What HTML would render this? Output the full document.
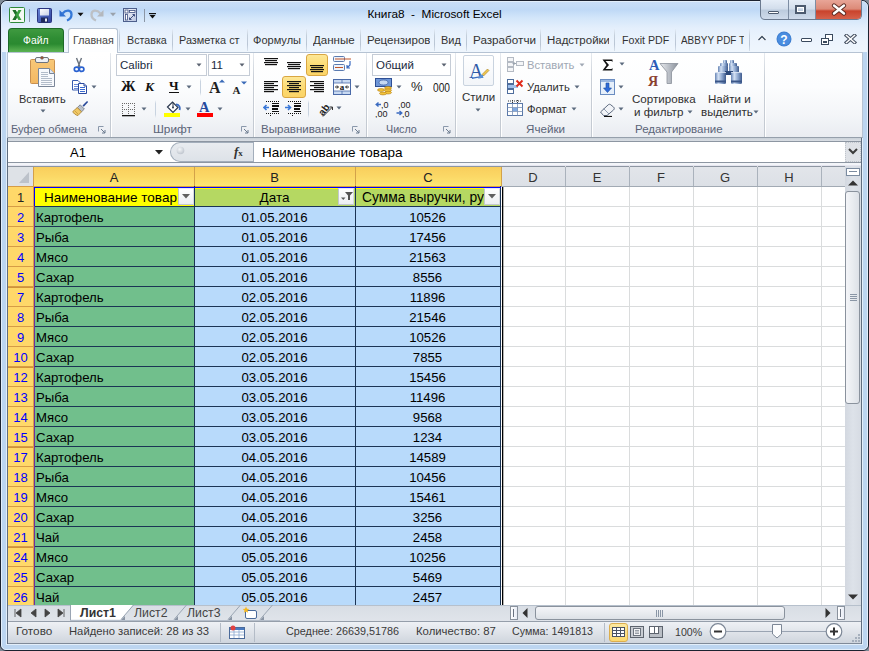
<!DOCTYPE html>
<html><head><meta charset="utf-8">
<style>
*{box-sizing:border-box;margin:0;padding:0}
html,body{width:869px;height:651px;overflow:hidden}
body{position:relative;font-family:"Liberation Sans",sans-serif;background:#c4d8ef}
.a{position:absolute}
.t{white-space:nowrap}
</style></head><body>

<div class="a" style="left:0px;top:0px;width:869px;height:651px;background:#7f8a96"></div>
<div class="a" style="left:0px;top:0px;width:869px;height:651px;background:#bcd5f0;border:1px solid #1c2230;border-radius:7px 7px 6px 6px;"></div>
<div class="a" style="left:1px;top:1px;width:867px;height:649px;border:1px solid #e2eefa;border-radius:6px 6px 5px 5px;"></div>
<div class="a" style="left:2px;top:2px;width:865px;height:50px;background:linear-gradient(#c9def7 0,#bfd9f6 8px,#d3e6fa 16px,#e4effc 26px,#ecf4fd 40px,#eff6fd 50px);border-radius:5px 5px 0 0;"></div>
<div class="a" style="left:6px;top:52px;width:857px;height:593px;border:1px solid #e2eefa;"></div>
<div class="a" style="left:7px;top:52px;width:855px;height:592px;border:1px solid #5f6d80;border-top:none"></div>
<div class="a t" style="left:0px;top:6.0px;height:16px;line-height:16px;font-size:11.8px;color:#000;width:869px;text-align:center;">Книга8&nbsp; -&nbsp; Microsoft Excel</div>
<svg class="a" style="left:8px;top:6px" width="18" height="18" viewBox="0 0 18 18"><rect x="1.5" y="1.5" width="15" height="15" rx="1" fill="#f4f9f2" stroke="#2f8a3a"/><path d="M4.5 4 H7.6 L9 6.6 L10.4 4 H13.5 L10.6 9 L13.5 14 H10.4 L9 11.4 L7.6 14 H4.5 L7.4 9z" fill="#3aa040"/><path d="M4.5 4 H7.6 L9 6.6 L7.4 9 z M4.5 14 L7.4 9 L9 11.4 L7.6 14z" fill="#1f6f2a"/></svg>
<div class="a" style="left:29px;top:9px;width:1px;height:13px;background:#8b9bb0"></div>
<svg class="a" style="left:37px;top:8px" width="15" height="15" viewBox="0 0 15 15"><defs><linearGradient id="sv" x1="0" y1="0" x2="1" y2="1"><stop offset="0" stop-color="#6a86d8"/><stop offset="1" stop-color="#2c3f9a"/></linearGradient><linearGradient id="svl" x1="0" y1="0" x2="1" y2="1"><stop offset="0" stop-color="#ffffff"/><stop offset="1" stop-color="#c8d2e8"/></linearGradient></defs><rect x="0.5" y="0.5" width="14" height="14" rx="1" fill="url(#sv)" stroke="#2a3580"/><rect x="3" y="1" width="9" height="6.5" fill="url(#svl)"/><rect x="4" y="9.5" width="7" height="5" fill="#1e2a5e"/><rect x="8" y="10.5" width="2" height="3" fill="#e8ecf5"/></svg>
<svg class="a" style="left:58px;top:7px" width="16" height="15" viewBox="0 0 16 15"><path d="M1.5 3 L1.5 9.5 L8 9.5z" fill="#2f6fd0"/><path d="M4.5 6.5 C8 2.5 13.5 2.5 13.5 7.5 C13.5 10.5 11.5 12.5 9 13.5" fill="none" stroke="#3478d8" stroke-width="2.3"/></svg>
<svg class="a" style="left:77px;top:12px" width="7" height="5" viewBox="0 0 7 5"><path d="M0.5 0.8h6l-3 3.4z" fill="#111"/></svg>
<svg class="a" style="left:89px;top:7px" width="16" height="15" viewBox="0 0 16 15"><path d="M14.5 3 L14.5 9.5 L8 9.5z" fill="#b4b8bd"/><path d="M11.5 6.5 C8 2.5 2.5 2.5 2.5 7.5 C2.5 10.5 4.5 12.5 7 13.5" fill="none" stroke="#bcc0c5" stroke-width="2.3"/></svg>
<svg class="a" style="left:110px;top:12px" width="6" height="5" viewBox="0 0 6 5"><path d="M0 0.8h6l-3 3.4z" fill="#9aa2ac"/></svg>
<svg class="a" style="left:123px;top:8px" width="14" height="14" viewBox="0 0 14 14"><defs><linearGradient id="qc" x1="0" y1="0" x2="1" y2="1"><stop offset="0" stop-color="#ffffff"/><stop offset="1" stop-color="#b8c4e0"/></linearGradient></defs><rect x="0.5" y="0.5" width="13" height="13" fill="url(#qc)" stroke="#4d5f8c"/><rect x="2" y="2" width="3" height="3" fill="#fff" stroke="#3d4f80" stroke-width="0.8"/><rect x="6.5" y="2.5" width="5.5" height="2" fill="#fff" stroke="#3d4f80" stroke-width="0.8"/><rect x="2.5" y="6.5" width="2" height="5.5" fill="#fff" stroke="#3d4f80" stroke-width="0.8"/><path d="M6.5 11.5 L11.5 6.5 M6.5 9.5 V11.5 H8.5 M11.5 8.5 V6.5 H9.5" stroke="#3d4f80" fill="none" stroke-width="1"/></svg>
<div class="a" style="left:144px;top:9px;width:1px;height:13px;background:#8b96a5"></div>
<svg class="a" style="left:149px;top:13px" width="8" height="6" viewBox="0 0 8 6"><rect x="0" y="0" width="7" height="1.2" fill="#111"/><path d="M0.5 2h6l-3 3.5z" fill="#111"/></svg>
<div class="a" style="left:760px;top:0;width:102px;height:20px;border:1px solid #6b7a8f;border-top:none;border-radius:0 0 5px 5px;overflow:hidden;background:linear-gradient(#e5edf7 0,#d3deec 45%,#bccbdd 55%,#cfdbeb 100%)">
<div class="a" style="left:27px;top:0;width:1px;height:20px;background:#7d8da3"></div>
<div class="a" style="left:54px;top:0;width:47px;height:20px;background:linear-gradient(#e8a597 0,#dc8a78 45%,#c9432c 55%,#d7654f 100%);border-left:1px solid #7d8da3"></div>
</div>
<div class="a" style="left:768px;top:11px;width:11px;height:3px;background:#fff;border:1px solid #4c5a6e;border-radius:1px"></div>
<div class="a" style="left:795px;top:5px;width:11px;height:9px;background:transparent;border:2px solid #4c5a6e;box-shadow:inset 0 0 0 1px #fff"></div>
<svg class="a" style="left:831px;top:3px" width="16" height="13" viewBox="0 0 16 13"><path d="M3 2.5 L13 10.5 M13 2.5 L3 10.5" stroke="#5a2a22" stroke-width="4.2" stroke-linecap="round"/><path d="M3 2.5 L13 10.5 M13 2.5 L3 10.5" stroke="#fff" stroke-width="2.4" stroke-linecap="round"/></svg>
<div class="a" style="left:8px;top:28px;width:56px;height:24px;background:linear-gradient(#3f9a40 0,#2f8d34 40%,#2a8a30 65%,#4fa84a 90%,#5bb352 100%);border:1px solid #1d6a28;border-bottom:none;border-radius:4px 4px 0 0"></div>
<svg class="a" style="left:23px;top:29.900000000000002px;overflow:hidden" width="31" height="19"><text x="0" y="13.7" font-family="Liberation Sans" font-size="11.7" fill="#fff" textLength="25.5" lengthAdjust="spacingAndGlyphs" >Файл</text></svg>
<div class="a" style="left:68px;top:28px;width:50px;height:25px;background:linear-gradient(#fff,#fdfeff);border:1px solid #b6c3d3;border-bottom:none;border-radius:3px 3px 0 0"></div>
<svg class="a" style="left:72.5px;top:29.8px;overflow:hidden" width="46" height="19"><text x="0" y="13.7" font-family="Liberation Sans" font-size="11.7" fill="#444" textLength="40.7" lengthAdjust="spacingAndGlyphs" >Главная</text></svg>
<div class="a" style="left:119px;top:29px;width:1px;height:22px;background:linear-gradient(#e4ecf6,#c3cedb 30%,#b9c5d4 70%,#d6e0eb)"></div>
<svg class="a" style="left:126.5px;top:29.8px;overflow:hidden" width="45" height="19"><text x="0" y="13.7" font-family="Liberation Sans" font-size="11.7" fill="#333" textLength="39.8" lengthAdjust="spacingAndGlyphs" >Вставка</text></svg>
<div class="a" style="left:172px;top:29px;width:1px;height:22px;background:linear-gradient(#e4ecf6,#c3cedb 30%,#b9c5d4 70%,#d6e0eb)"></div>
<svg class="a" style="left:179px;top:29.8px;overflow:hidden" width="66" height="19"><text x="0" y="13.7" font-family="Liberation Sans" font-size="11.7" fill="#333" textLength="60.6" lengthAdjust="spacingAndGlyphs" >Разметка ст</text></svg>
<div class="a" style="left:247px;top:29px;width:1px;height:22px;background:linear-gradient(#e4ecf6,#c3cedb 30%,#b9c5d4 70%,#d6e0eb)"></div>
<svg class="a" style="left:253px;top:29.8px;overflow:hidden" width="54" height="19"><text x="0" y="13.7" font-family="Liberation Sans" font-size="11.7" fill="#333" textLength="48" lengthAdjust="spacingAndGlyphs" >Формулы</text></svg>
<div class="a" style="left:306px;top:29px;width:1px;height:22px;background:linear-gradient(#e4ecf6,#c3cedb 30%,#b9c5d4 70%,#d6e0eb)"></div>
<svg class="a" style="left:312.7px;top:29.8px;overflow:hidden" width="47" height="19"><text x="0" y="13.7" font-family="Liberation Sans" font-size="11.7" fill="#333" textLength="41.7" lengthAdjust="spacingAndGlyphs" >Данные</text></svg>
<div class="a" style="left:360px;top:29px;width:1px;height:22px;background:linear-gradient(#e4ecf6,#c3cedb 30%,#b9c5d4 70%,#d6e0eb)"></div>
<svg class="a" style="left:367px;top:29.8px;overflow:hidden" width="63" height="19"><text x="0" y="13.7" font-family="Liberation Sans" font-size="11.7" fill="#333" textLength="63.5" lengthAdjust="spacingAndGlyphs" >Рецензиров</text></svg>
<div class="a" style="left:434px;top:29px;width:1px;height:22px;background:linear-gradient(#e4ecf6,#c3cedb 30%,#b9c5d4 70%,#d6e0eb)"></div>
<svg class="a" style="left:441px;top:29.8px;overflow:hidden" width="25" height="19"><text x="0" y="13.7" font-family="Liberation Sans" font-size="11.7" fill="#333" textLength="19.8" lengthAdjust="spacingAndGlyphs" >Вид</text></svg>
<div class="a" style="left:466px;top:29px;width:1px;height:22px;background:linear-gradient(#e4ecf6,#c3cedb 30%,#b9c5d4 70%,#d6e0eb)"></div>
<svg class="a" style="left:473px;top:29.8px;overflow:hidden" width="69" height="19"><text x="0" y="13.7" font-family="Liberation Sans" font-size="11.7" fill="#333" textLength="63" lengthAdjust="spacingAndGlyphs" >Разработчи</text></svg>
<div class="a" style="left:540px;top:29px;width:1px;height:22px;background:linear-gradient(#e4ecf6,#c3cedb 30%,#b9c5d4 70%,#d6e0eb)"></div>
<svg class="a" style="left:547px;top:29.8px;overflow:hidden" width="62" height="19"><text x="0" y="13.7" font-family="Liberation Sans" font-size="11.7" fill="#333" textLength="63" lengthAdjust="spacingAndGlyphs" >Надстройки</text></svg>
<div class="a" style="left:614px;top:29px;width:1px;height:22px;background:linear-gradient(#e4ecf6,#c3cedb 30%,#b9c5d4 70%,#d6e0eb)"></div>
<svg class="a" style="left:621.5px;top:29.8px;overflow:hidden" width="53" height="19"><text x="0" y="13.7" font-family="Liberation Sans" font-size="11.7" fill="#333" textLength="47.3" lengthAdjust="spacingAndGlyphs" >Foxit PDF</text></svg>
<div class="a" style="left:675px;top:29px;width:1px;height:22px;background:linear-gradient(#e4ecf6,#c3cedb 30%,#b9c5d4 70%,#d6e0eb)"></div>
<svg class="a" style="left:681px;top:29.8px;overflow:hidden" width="63" height="19"><text x="0" y="13.7" font-family="Liberation Sans" font-size="11.7" fill="#333" textLength="64" lengthAdjust="spacingAndGlyphs" >ABBYY PDF T</text></svg>
<div class="a" style="left:749px;top:29px;width:1px;height:22px;background:linear-gradient(#e4ecf6,#c3cedb 30%,#b9c5d4 70%,#d6e0eb)"></div>
<svg class="a" style="left:757px;top:34px" width="10" height="8" viewBox="0 0 10 8"><path d="M1.5 6 L5 2.5 L8.5 6" fill="none" stroke="#fff" stroke-width="3"/><path d="M1.5 6 L5 2.5 L8.5 6" fill="none" stroke="#3a4a5e" stroke-width="1.4"/></svg>
<svg class="a" style="left:776px;top:31px" width="16" height="16" viewBox="0 0 16 16"><circle cx="8" cy="8" r="7.5" fill="#3f7fd0"/><circle cx="8" cy="8" r="6.5" fill="#4a8de0"/><text x="8" y="12.5" font-family="Liberation Sans" font-weight="bold" font-size="12" fill="#fff" text-anchor="middle">?</text></svg>
<div class="a" style="left:801px;top:38px;width:11px;height:4px;background:#fff;border:1px solid #3a4a5e;border-radius:1px"></div>
<svg class="a" style="left:821px;top:34px" width="12" height="11" viewBox="0 0 12 11"><rect x="4.5" y="0.5" width="7" height="6" fill="#fff" stroke="#3a4a5e"/><rect x="0.5" y="4.5" width="7" height="6" fill="#fff" stroke="#3a4a5e"/><rect x="2" y="7" width="4" height="2" fill="#3a4a5e"/></svg>
<svg class="a" style="left:844px;top:34px" width="13" height="10" viewBox="0 0 13 10"><path d="M2.5 1.5 L10.5 8.5 M10.5 1.5 L2.5 8.5" stroke="#4a5566" stroke-width="3.6" stroke-linecap="square"/><path d="M2.5 1.5 L10.5 8.5 M10.5 1.5 L2.5 8.5" stroke="#fff" stroke-width="1.5" stroke-linecap="square"/></svg>
<div class="a" style="left:7px;top:52px;width:856px;height:86px;background:linear-gradient(#ffffff 0,#fcfdfe 40%,#f3f5f8 75%,#e9ecf1 100%);border:1px solid #b6c3d3;border-bottom-color:#959fab"></div>
<div class="a" style="left:69px;top:52px;width:48px;height:1px;background:#fff"></div>
<div class="a" style="left:110px;top:53px;width:1px;height:84px;background:linear-gradient(#e6eaef,#c9cfd7 30%,#c3c9d1 100%)"></div>
<div class="a" style="left:111px;top:53px;width:1px;height:84px;background:#ffffff"></div>
<div class="a" style="left:253px;top:53px;width:1px;height:84px;background:linear-gradient(#e6eaef,#c9cfd7 30%,#c3c9d1 100%)"></div>
<div class="a" style="left:254px;top:53px;width:1px;height:84px;background:#ffffff"></div>
<div class="a" style="left:366px;top:53px;width:1px;height:84px;background:linear-gradient(#e6eaef,#c9cfd7 30%,#c3c9d1 100%)"></div>
<div class="a" style="left:367px;top:53px;width:1px;height:84px;background:#ffffff"></div>
<div class="a" style="left:455px;top:53px;width:1px;height:84px;background:linear-gradient(#e6eaef,#c9cfd7 30%,#c3c9d1 100%)"></div>
<div class="a" style="left:456px;top:53px;width:1px;height:84px;background:#ffffff"></div>
<div class="a" style="left:500px;top:53px;width:1px;height:84px;background:linear-gradient(#e6eaef,#c9cfd7 30%,#c3c9d1 100%)"></div>
<div class="a" style="left:501px;top:53px;width:1px;height:84px;background:#ffffff"></div>
<div class="a" style="left:591px;top:53px;width:1px;height:84px;background:linear-gradient(#e6eaef,#c9cfd7 30%,#c3c9d1 100%)"></div>
<div class="a" style="left:592px;top:53px;width:1px;height:84px;background:#ffffff"></div>
<div class="a" style="left:764px;top:53px;width:1px;height:84px;background:linear-gradient(#e6eaef,#c9cfd7 30%,#c3c9d1 100%)"></div>
<div class="a" style="left:765px;top:53px;width:1px;height:84px;background:#ffffff"></div>
<svg class="a" style="left:11px;top:118.9px;overflow:hidden" width="82" height="19"><text x="0" y="13.6" font-family="Liberation Sans" font-size="11.6" fill="#5b6478" textLength="76" lengthAdjust="spacingAndGlyphs" >Буфер обмена</text></svg>
<svg class="a" style="left:98px;top:126px" width="8" height="8" viewBox="0 0 8 8"><path d="M0.5 0.5h5" stroke="#8a98ab"/><path d="M0.5 0.5v5" stroke="#8a98ab"/><path d="M3 3l4 4M7 4v3H4" stroke="#6b7a8e" fill="none"/></svg>
<svg class="a" style="left:153px;top:118.9px;overflow:hidden" width="45" height="19"><text x="0" y="13.6" font-family="Liberation Sans" font-size="11.6" fill="#5b6478" textLength="39" lengthAdjust="spacingAndGlyphs" >Шрифт</text></svg>
<svg class="a" style="left:241px;top:126px" width="8" height="8" viewBox="0 0 8 8"><path d="M0.5 0.5h5" stroke="#8a98ab"/><path d="M0.5 0.5v5" stroke="#8a98ab"/><path d="M3 3l4 4M7 4v3H4" stroke="#6b7a8e" fill="none"/></svg>
<svg class="a" style="left:261px;top:118.9px;overflow:hidden" width="85" height="19"><text x="0" y="13.6" font-family="Liberation Sans" font-size="11.6" fill="#5b6478" textLength="79.5" lengthAdjust="spacingAndGlyphs" >Выравнивание</text></svg>
<svg class="a" style="left:352px;top:126px" width="8" height="8" viewBox="0 0 8 8"><path d="M0.5 0.5h5" stroke="#8a98ab"/><path d="M0.5 0.5v5" stroke="#8a98ab"/><path d="M3 3l4 4M7 4v3H4" stroke="#6b7a8e" fill="none"/></svg>
<svg class="a" style="left:386.2px;top:118.9px;overflow:hidden" width="36" height="19"><text x="0" y="13.6" font-family="Liberation Sans" font-size="11.6" fill="#5b6478" textLength="30.8" lengthAdjust="spacingAndGlyphs" >Число</text></svg>
<svg class="a" style="left:443px;top:126px" width="8" height="8" viewBox="0 0 8 8"><path d="M0.5 0.5h5" stroke="#8a98ab"/><path d="M0.5 0.5v5" stroke="#8a98ab"/><path d="M3 3l4 4M7 4v3H4" stroke="#6b7a8e" fill="none"/></svg>
<svg class="a" style="left:526.3px;top:118.9px;overflow:hidden" width="45" height="19"><text x="0" y="13.6" font-family="Liberation Sans" font-size="11.6" fill="#5b6478" textLength="39" lengthAdjust="spacingAndGlyphs" >Ячейки</text></svg>
<svg class="a" style="left:635.3px;top:118.9px;overflow:hidden" width="93" height="19"><text x="0" y="13.6" font-family="Liberation Sans" font-size="11.6" fill="#5b6478" textLength="87.7" lengthAdjust="spacingAndGlyphs" >Редактирование</text></svg>
<svg class="a" style="left:29px;top:56px" width="29" height="32" viewBox="0 0 29 32"><defs><linearGradient id="clb" x1="0" y1="0" x2="0" y2="1"><stop offset="0" stop-color="#f8c878"/><stop offset="1" stop-color="#f3b862"/></linearGradient></defs>
<rect x="1.5" y="3.5" width="24" height="24" rx="1" fill="url(#clb)" stroke="#c89050"/>
<rect x="6.5" y="1.5" width="13" height="5" rx="1.5" fill="#eef0f4" stroke="#6d737c"/><circle cx="13" cy="1.8" r="1.5" fill="#a05030" stroke="#6d737c" stroke-width="0.6"/>
<path d="M9.5 12.5h11l5 5v13h-16z" fill="#f8fafd" stroke="#7a8698"/><path d="M20.5 12.5v5h5" fill="#dfe6f0" stroke="#7a8698"/>
<path d="M12 16.5h7M12 18.5h7M12 20.5h7M12 22.5h11M12 24.5h11M12 26.5h11M12 28.5h11" stroke="#aab6c4" stroke-width="0.9"/></svg>
<div class="a t" style="left:19px;top:91.0px;height:16px;line-height:16px;font-size:11px;color:#303030;">Вставить</div>
<svg class="a" style="left:40px;top:109px" width="6" height="4" viewBox="0 0 6 4"><path d="M0.5 0.5h5l-2.5 3z" fill="#5c6b7e"/></svg>
<svg class="a" style="left:73px;top:57px" width="12" height="16" viewBox="0 0 12 16"><path d="M3.5 1 L7 10 M8.5 1 L5 10" stroke="#6a737e" stroke-width="1.4"/><ellipse cx="3.6" cy="12.3" rx="2.3" ry="2.1" fill="none" stroke="#2a62d0" stroke-width="1.7"/><ellipse cx="8.6" cy="12.3" rx="2.3" ry="2.1" fill="none" stroke="#2a62d0" stroke-width="1.7"/></svg>
<svg class="a" style="left:71px;top:79px" width="18" height="15" viewBox="0 0 18 15"><path d="M1.5 1.5h5.5l2.5 2.5v7h-8z" fill="#fff" stroke="#3a5cb0"/><path d="M3 5.5h5M3 7.5h5M3 9.5h5" stroke="#6a8ad8"/><path d="M7.5 4.5h5.5l2.5 2.5v7.5h-8z" fill="#fff" stroke="#2a4aa0"/><path d="M13 4.5v2.5h2.5" fill="#c8d8f0" stroke="#2a4aa0"/><path d="M9 8.5h5M9 10.5h5M9 12.5h5" stroke="#3a6ad0"/></svg>
<svg class="a" style="left:91px;top:85px" width="6" height="4" viewBox="0 0 6 4"><path d="M0.5 0.5h5l-2.5 3z" fill="#5c6b7e"/></svg>
<svg class="a" style="left:72px;top:100px" width="17" height="17" viewBox="0 0 17 17"><path d="M10.5 5.5 L14.5 1.5 C15.5 1 16.2 1.7 15.7 2.6 L11.8 6.8z" fill="#2a4a9a"/><path d="M8.2 4.8 L12.4 9 L9.5 11.8 L5.3 7.6z" fill="#b9c0ca" stroke="#6e7682" stroke-width="0.8"/><path d="M5.3 7.6 L9.5 11.8 L6 15.5 C4 15.5 1 13 0.8 11.5z" fill="#f0c866" stroke="#a88030" stroke-width="0.8"/><path d="M3 11 L6 14" stroke="#c89a3a" stroke-width="0.8"/></svg>
<div class="a" style="left:116px;top:54px;width:91px;height:22px;background:#fff;border:1px solid #c5ccd6"></div>
<div class="a" style="left:208px;top:54px;width:42px;height:22px;background:#fff;border:1px solid #c5ccd6"></div>
<div class="a t" style="left:120px;top:56.5px;height:16px;line-height:16px;font-size:11.5px;color:#1a2a40;">Calibri</div>
<svg class="a" style="left:196px;top:62.5px" width="6" height="4" viewBox="0 0 6 4"><path d="M0.5 0.5h5l-2.5 3z" fill="#5a6270"/></svg>
<div class="a t" style="left:211px;top:56.5px;height:16px;line-height:16px;font-size:11.5px;color:#1a2a40;">11</div>
<svg class="a" style="left:239px;top:62.5px" width="6" height="4" viewBox="0 0 6 4"><path d="M0.5 0.5h5l-2.5 3z" fill="#5a6270"/></svg>
<svg class="a" style="left:120px;top:80px" width="16" height="12" viewBox="0 0 16 12"><text x="8" y="10.5" font-size="14" font-family="Liberation Serif" font-weight="bold" fill="#111" text-anchor="middle" transform="scale(1.05 1)">Ж</text></svg>
<div class="a t" style="left:145px;top:78.5px;height:16px;line-height:16px;font-size:13.5px;color:#111;font-weight:bold;font-style:italic;font-family:Liberation Serif">К</div>
<div class="a t" style="left:169px;top:78.0px;height:16px;line-height:16px;font-size:13px;color:#111;font-weight:bold;font-family:Liberation Serif">Ч</div>
<div class="a" style="left:169px;top:92px;width:10px;height:1px;background:#111"></div>
<svg class="a" style="left:186px;top:85px" width="6" height="4" viewBox="0 0 6 4"><path d="M0.5 0.5h5l-2.5 3z" fill="#5c6b7e"/></svg>
<div class="a" style="left:200px;top:78px;width:1px;height:18px;background:linear-gradient(#fff0,#c8d3e0 20%,#c8d3e0 80%,#fff0)"></div>
<div class="a t" style="left:209px;top:79.5px;height:16px;line-height:16px;font-size:16px;color:#222;font-family:Liberation Serif;font-weight:bold">A</div>
<svg class="a" style="left:219px;top:79px" width="6" height="4" viewBox="0 0 6 4"><path d="M0 3.5 L3 0.5 L6 3.5z" fill="#3a6ab8"/></svg>
<div class="a t" style="left:232.5px;top:81.5px;height:16px;line-height:16px;font-size:11px;color:#222;font-family:Liberation Serif;font-weight:bold">A</div>
<svg class="a" style="left:241px;top:81px" width="6" height="4" viewBox="0 0 6 4"><path d="M0 0.5 L3 3.5 L6 0.5z" fill="#3a6ab8"/></svg>
<svg class="a" style="left:122px;top:103px" width="14" height="14" viewBox="0 0 14 14"><g fill="#6a6a6a"><rect x="0" y="0" width="1" height="1"/><rect x="2" y="0" width="1" height="1"/><rect x="4" y="0" width="1" height="1"/><rect x="6" y="0" width="1" height="1"/><rect x="8" y="0" width="1" height="1"/><rect x="10" y="0" width="1" height="1"/><rect x="12" y="0" width="1" height="1"/><rect x="0" y="2" width="1" height="1"/><rect x="6" y="2" width="1" height="1"/><rect x="12" y="2" width="1" height="1"/><rect x="0" y="4" width="1" height="1"/><rect x="6" y="4" width="1" height="1"/><rect x="12" y="4" width="1" height="1"/><rect x="0" y="6" width="1" height="1"/><rect x="2" y="6" width="1" height="1"/><rect x="4" y="6" width="1" height="1"/><rect x="6" y="6" width="1" height="1"/><rect x="8" y="6" width="1" height="1"/><rect x="10" y="6" width="1" height="1"/><rect x="12" y="6" width="1" height="1"/><rect x="0" y="8" width="1" height="1"/><rect x="6" y="8" width="1" height="1"/><rect x="12" y="8" width="1" height="1"/><rect x="0" y="10" width="1" height="1"/><rect x="6" y="10" width="1" height="1"/><rect x="12" y="10" width="1" height="1"/></g><rect x="0" y="12" width="13" height="1.3" fill="#111"/></svg>
<svg class="a" style="left:141px;top:107px" width="6" height="4" viewBox="0 0 6 4"><path d="M0.5 0.5h5l-2.5 3z" fill="#5c6b7e"/></svg>
<div class="a" style="left:155px;top:100px;width:1px;height:18px;background:linear-gradient(#fff0,#c8d3e0 20%,#c8d3e0 80%,#fff0)"></div>
<svg class="a" style="left:164px;top:99px" width="17" height="19" viewBox="0 0 17 19"><path d="M3.5 8 L8.5 3 L14 8.5 L9 13.5z" fill="#fff" stroke="#2c3a50" stroke-width="1.2"/><path d="M9 3.5 V8" stroke="#2c3a50"/><circle cx="9" cy="8.5" r="1" fill="#2c3a50"/><path d="M12 5.5 C15 5.5 16.5 8 15.5 11" stroke="#3a6ac0" stroke-width="1.8" fill="none"/><rect x="0" y="14" width="16" height="4" fill="#ffff00"/></svg>
<svg class="a" style="left:185px;top:107px" width="6" height="4" viewBox="0 0 6 4"><path d="M0.5 0.5h5l-2.5 3z" fill="#5c6b7e"/></svg>
<div class="a t" style="left:199px;top:98.5px;height:16px;line-height:16px;font-size:14.5px;color:#264a9e;font-family:Liberation Serif;font-weight:bold">A</div>
<div class="a" style="left:197px;top:113px;width:16px;height:4px;background:#ff0000"></div>
<svg class="a" style="left:217px;top:107px" width="6" height="4" viewBox="0 0 6 4"><path d="M0.5 0.5h5l-2.5 3z" fill="#5c6b7e"/></svg>
<div class="a" style="left:306px;top:54px;width:22px;height:22px;background:linear-gradient(#fde796,#fcd96f 60%,#fbd468);border:1px solid #d9a642;border-radius:3px"></div>
<div class="a" style="left:282px;top:76px;width:24px;height:22px;background:linear-gradient(#fde796,#fcd96f 60%,#fbd468);border:1px solid #d9a642;border-radius:3px"></div>
<svg class="a" style="left:0;top:0" width="400" height="100"><rect x="264" y="58" width="14" height="1.2" fill="#111"/><rect x="265" y="60" width="12" height="1.2" fill="#111"/><rect x="264" y="62" width="14" height="1.2" fill="#111"/><rect x="265" y="64" width="12" height="1.2" fill="#111"/><rect x="287" y="62" width="14" height="1.2" fill="#111"/><rect x="288" y="64" width="12" height="1.2" fill="#111"/><rect x="287" y="66" width="14" height="1.2" fill="#111"/><rect x="288" y="68" width="12" height="1.2" fill="#111"/><rect x="310" y="65" width="14" height="1.2" fill="#111"/><rect x="311" y="67" width="12" height="1.2" fill="#111"/><rect x="310" y="69" width="14" height="1.2" fill="#111"/><rect x="311" y="71" width="12" height="1.2" fill="#111"/><rect x="264" y="81" width="14" height="1.2" fill="#111"/><rect x="264" y="83" width="10" height="1.2" fill="#111"/><rect x="264" y="85" width="14" height="1.2" fill="#111"/><rect x="264" y="87" width="10" height="1.2" fill="#111"/><rect x="264" y="89" width="14" height="1.2" fill="#111"/><rect x="264" y="91" width="10" height="1.2" fill="#111"/><rect x="287" y="81" width="14" height="1.2" fill="#111"/><rect x="289" y="83" width="10" height="1.2" fill="#111"/><rect x="287" y="85" width="14" height="1.2" fill="#111"/><rect x="289" y="87" width="10" height="1.2" fill="#111"/><rect x="287" y="89" width="14" height="1.2" fill="#111"/><rect x="289" y="91" width="10" height="1.2" fill="#111"/><rect x="310" y="81" width="14" height="1.2" fill="#111"/><rect x="314" y="83" width="10" height="1.2" fill="#111"/><rect x="310" y="85" width="14" height="1.2" fill="#111"/><rect x="314" y="87" width="10" height="1.2" fill="#111"/><rect x="310" y="89" width="14" height="1.2" fill="#111"/><rect x="314" y="91" width="10" height="1.2" fill="#111"/></svg>
<svg class="a" style="left:333px;top:55px" width="20" height="17" viewBox="0 0 20 17"><rect x="0.5" y="1.5" width="11" height="5" rx="1" fill="#eef3fa" stroke="#5b7bb0"/><rect x="0.5" y="9.5" width="11" height="6" rx="1" fill="#eef3fa" stroke="#5b7bb0"/><path d="M2 4h16M2 12.5h8" stroke="#c0562a" stroke-width="1.2"/><path d="M17 6 V10 L14 13 M14 10 V13 H17" stroke="#3a6ac0" fill="none" stroke-width="1.2"/></svg>
<svg class="a" style="left:333px;top:79px" width="18" height="16" viewBox="0 0 18 16"><rect x="0.5" y="0.5" width="17" height="15" fill="#c9daf2" stroke="#4a6aa8"/><rect x="1" y="4" width="16" height="8" fill="#fff"/><path d="M9 1v3M9 12v3M1 4h16M1 12h16" stroke="#4a6aa8" stroke-width="0.8"/><path d="M2 8h3M13 8h3" stroke="#222"/><path d="M4 6.5 L5.5 8 L4 9.5M14 6.5 L12.5 8 L14 9.5" stroke="#222" fill="none"/><text x="9" y="11" font-size="9" font-weight="bold" font-family="Liberation Serif" text-anchor="middle" fill="#111">a</text></svg>
<svg class="a" style="left:354px;top:85px" width="6" height="4" viewBox="0 0 6 4"><path d="M0.5 0.5h5l-2.5 3z" fill="#5c6b7e"/></svg>
<svg class="a" style="left:263px;top:101px" width="17" height="16" viewBox="0 0 17 16"><g fill="#111"><rect x="3" y="0" width="1" height="1"/><rect x="3" y="12" width="1" height="1"/><rect x="5" y="0" width="1" height="1"/><rect x="5" y="12" width="1" height="1"/><rect x="7" y="0" width="1" height="1"/><rect x="7" y="12" width="1" height="1"/><rect x="9" y="0" width="1" height="1"/><rect x="9" y="12" width="1" height="1"/><rect x="11" y="0" width="1" height="1"/><rect x="11" y="12" width="1" height="1"/><rect x="13" y="0" width="1" height="1"/><rect x="13" y="12" width="1" height="1"/><rect x="15" y="0" width="1" height="1"/><rect x="15" y="12" width="1" height="1"/><rect x="9" y="2" width="7" height="1"/><rect x="9" y="4" width="7" height="2"/><rect x="9" y="7" width="6" height="2"/><rect x="9" y="10" width="7" height="1"/><rect x="7" y="14" width="1" height="1"/><rect x="7" y="-1" width="1" height="1"/></g><path d="M0.8 6.5 H6 M3.5 4 L1 6.5 L3.5 9" stroke="#3a78d8" stroke-width="1.6" fill="none"/></svg>
<svg class="a" style="left:285px;top:101px" width="17" height="16" viewBox="0 0 17 16"><g fill="#111"><rect x="3" y="0" width="1" height="1"/><rect x="3" y="12" width="1" height="1"/><rect x="5" y="0" width="1" height="1"/><rect x="5" y="12" width="1" height="1"/><rect x="7" y="0" width="1" height="1"/><rect x="7" y="12" width="1" height="1"/><rect x="9" y="0" width="1" height="1"/><rect x="9" y="12" width="1" height="1"/><rect x="11" y="0" width="1" height="1"/><rect x="11" y="12" width="1" height="1"/><rect x="13" y="0" width="1" height="1"/><rect x="13" y="12" width="1" height="1"/><rect x="15" y="0" width="1" height="1"/><rect x="15" y="12" width="1" height="1"/><rect x="9" y="2" width="7" height="1"/><rect x="9" y="4" width="7" height="2"/><rect x="9" y="7" width="6" height="2"/><rect x="9" y="10" width="7" height="1"/><rect x="7" y="14" width="1" height="1"/><rect x="7" y="-1" width="1" height="1"/></g><path d="M0 6.5 H5.5 M3 4 L5.5 6.5 L3 9" stroke="#3a78d8" stroke-width="1.6" fill="none"/></svg>
<div class="a" style="left:308px;top:100px;width:1px;height:18px;background:linear-gradient(#fff0,#c8d3e0 20%,#c8d3e0 80%,#fff0)"></div>
<svg class="a" style="left:317px;top:101px" width="19" height="17" viewBox="0 0 19 17"><text x="1" y="13" font-size="10" font-family="Liberation Sans" font-weight="bold" fill="#222" transform="rotate(-52 6 9)">ab</text><path d="M6 15.5 L15.5 6 M12.5 6 H15.5 V9" stroke="#333" fill="none" stroke-width="1"/></svg>
<svg class="a" style="left:336px;top:106px" width="6" height="4" viewBox="0 0 6 4"><path d="M0.5 0.5h5l-2.5 3z" fill="#5c6b7e"/></svg>
<div class="a" style="left:372px;top:54px;width:79px;height:22px;background:#fff;border:1px solid #c5ccd6"></div>
<div class="a t" style="left:376px;top:56.5px;height:16px;line-height:16px;font-size:11.5px;color:#1a2a40;">Общий</div>
<svg class="a" style="left:441px;top:62.5px" width="6" height="4" viewBox="0 0 6 4"><path d="M0.5 0.5h5l-2.5 3z" fill="#5a6270"/></svg>
<svg class="a" style="left:375px;top:78px" width="19" height="18" viewBox="0 0 19 18"><rect x="0.5" y="0.5" width="16" height="8" fill="#6f97d8" stroke="#2e4f94"/><ellipse cx="8.5" cy="4.5" rx="4.5" ry="2.5" fill="#c5d8f3" stroke="#3a5aa0" stroke-width="0.7"/><g fill="#f3c33a" stroke="#b07a10" stroke-width="0.6"><ellipse cx="13" cy="10" rx="3.5" ry="1.4"/><ellipse cx="13" cy="12.3" rx="3.5" ry="1.4"/><ellipse cx="13" cy="14.6" rx="3.5" ry="1.4"/><ellipse cx="6" cy="12" rx="3.5" ry="1.4"/><ellipse cx="8" cy="15.5" rx="3.5" ry="1.4"/></g></svg>
<svg class="a" style="left:396px;top:85px" width="6" height="4" viewBox="0 0 6 4"><path d="M0.5 0.5h5l-2.5 3z" fill="#5c6b7e"/></svg>
<div class="a t" style="left:411px;top:79.0px;height:16px;line-height:16px;font-size:13px;color:#222;">%</div>
<svg class="a" style="left:433px;top:81px" width="17" height="12" viewBox="0 0 17 12"><text x="0" y="10.5" font-size="12" font-family="Liberation Sans" fill="#222" transform="scale(0.85 1)">000</text></svg>
<svg class="a" style="left:375px;top:100px" width="18" height="18" viewBox="0 0 18 18"><path d="M1.5 4.5 H6 M3.5 2.5 L1.2 4.5 L3.5 6.5" stroke="#3a6ac0" fill="none" stroke-width="1.4"/><text x="6" y="8" font-size="9" font-family="Liberation Sans" fill="#1a1a1a">,0</text><text x="0" y="17" font-size="9" font-family="Liberation Sans" fill="#1a1a1a">,00</text></svg>
<svg class="a" style="left:396px;top:100px" width="18" height="18" viewBox="0 0 18 18"><text x="2" y="8" font-size="9" font-family="Liberation Sans" fill="#1a1a1a">,00</text><path d="M0.5 13 H5.5 M3.5 11 L5.8 13 L3.5 15" stroke="#3a6ac0" fill="none" stroke-width="1.4"/><text x="6" y="17" font-size="9" font-family="Liberation Sans" fill="#1a1a1a">,0</text></svg>
<div class="a" style="left:463px;top:55px;width:31px;height:31px;background:linear-gradient(#ffffff,#f2f5f9);border:1px solid #c9d3df;border-radius:2px"></div>
<svg class="a" style="left:467px;top:59px" width="24" height="24" viewBox="0 0 24 24"><text x="2" y="19" font-size="20" font-family="Liberation Serif" fill="#2f5aa8">A</text><path d="M5 19.5 C9 18.5 13 18 16 17" stroke="#3d6cc0" stroke-width="1.2" fill="none"/><path d="M15 15.5 L20.5 10 L22 11.5 L16.5 17z" fill="#f0c850" stroke="#a07a20" stroke-width="0.6"/><path d="M11 19.5 C12 16.5 14.5 15 16.2 16.3 C16.5 18.5 14 20 11 19.5z" fill="#5a92d8"/></svg>
<div class="a t" style="left:462px;top:89.0px;height:16px;line-height:16px;font-size:11.5px;color:#303030;">Стили</div>
<svg class="a" style="left:475px;top:108px" width="6" height="4" viewBox="0 0 6 4"><path d="M0.5 0.5h5l-2.5 3z" fill="#5c6b7e"/></svg>
<svg class="a" style="left:507px;top:57px" width="18" height="15" viewBox="0 0 18 15"><g fill="#f4f5f7" stroke="#b4bac3"><rect x="0.5" y="0.5" width="6" height="4"/><rect x="0.5" y="5.5" width="6" height="4"/><rect x="0.5" y="10.5" width="6" height="4"/><rect x="9.5" y="4.5" width="7" height="4"/></g><path d="M6 6.5 H9 M7.5 5 L6 6.5 L7.5 8" stroke="#9aa3ae" fill="none"/></svg>
<div class="a t" style="left:527px;top:57.0px;height:16px;line-height:16px;font-size:11.2px;color:#a0a8b4;">Вставить</div>
<svg class="a" style="left:579px;top:63px" width="6" height="4" viewBox="0 0 6 4"><path d="M0.5 0.5h5l-2.5 3z" fill="#a0a8b4"/></svg>
<svg class="a" style="left:507px;top:79px" width="17" height="15" viewBox="0 0 17 15"><g fill="#fff" stroke="#4e6d9c"><rect x="0.5" y="0.5" width="6" height="4"/><rect x="0.5" y="5.5" width="6" height="4" fill="#9ec0ec"/><rect x="0.5" y="10.5" width="6" height="4"/></g><rect x="6" y="6" width="5" height="3" fill="#9ec0ec"/><path d="M9.5 1.5 L15.5 7.5 M15.5 1.5 L9.5 7.5" stroke="#e02a1a" stroke-width="1.9"/></svg>
<div class="a t" style="left:527px;top:79.0px;height:16px;line-height:16px;font-size:11.2px;color:#303030;">Удалить</div>
<svg class="a" style="left:574px;top:85px" width="6" height="4" viewBox="0 0 6 4"><path d="M0.5 0.5h5l-2.5 3z" fill="#5c6b7e"/></svg>
<svg class="a" style="left:507px;top:100px" width="17" height="17" viewBox="0 0 17 17"><rect x="0.5" y="3.5" width="15" height="12" fill="#fff" stroke="#5a78a8"/><rect x="5" y="8" width="6" height="3" fill="#7fa8e0"/><path d="M0.5 7.5h15M0.5 11.5h15M5.5 3.5v12M10.5 3.5v12" stroke="#7a92b8" stroke-width="0.8"/><path d="M1 1h14" stroke="#333" stroke-dasharray="1 1"/><path d="M5.5 0v3M10.5 0v3" stroke="#333" stroke-dasharray="1 1"/></svg>
<div class="a t" style="left:527px;top:101.0px;height:16px;line-height:16px;font-size:11.2px;color:#303030;">Формат</div>
<svg class="a" style="left:571px;top:107px" width="6" height="4" viewBox="0 0 6 4"><path d="M0.5 0.5h5l-2.5 3z" fill="#5c6b7e"/></svg>
<svg class="a" style="left:602px;top:59px" width="12" height="12" viewBox="0 0 12 12"><path d="M0.5 0.5 H10.5 V3 L9.5 2 H3.5 L7 6 L3.5 10 H9.5 L10.5 9 V11.5 H0.5 L4.5 6z" fill="#111"/></svg>
<svg class="a" style="left:619px;top:62px" width="6" height="4" viewBox="0 0 6 4"><path d="M0.5 0.5h5l-2.5 3z" fill="#5c6b7e"/></svg>
<svg class="a" style="left:600px;top:79px" width="15" height="16" viewBox="0 0 15 16"><rect x="0.5" y="0.5" width="14" height="15" fill="#e6effa" stroke="#6a8cc0"/><rect x="1" y="1" width="13" height="2" fill="#9ab6e0"/><path d="M6 4 H9 V9 H11.5 L7.5 13.5 L3.5 9 H6z" fill="#2e6ad8" stroke="#1a4aa0" stroke-width="0.6"/></svg>
<svg class="a" style="left:618px;top:85px" width="6" height="4" viewBox="0 0 6 4"><path d="M0.5 0.5h5l-2.5 3z" fill="#5c6b7e"/></svg>
<svg class="a" style="left:599px;top:102px" width="17" height="15" viewBox="0 0 17 15"><path d="M1.5 10 L9 3 C10 2 11 2 12 3 L14.5 5 C15.5 6 15.5 7 14.5 8 L8 13.5 H4.5z" fill="#f2f4f8" stroke="#5e6b80" stroke-width="1"/><path d="M4.5 6.5 L10 12" stroke="#7a8aa0" stroke-width="0.8"/><path d="M5 14.5 H13" stroke="#111" stroke-width="1.2"/></svg>
<svg class="a" style="left:618px;top:107px" width="6" height="4" viewBox="0 0 6 4"><path d="M0.5 0.5h5l-2.5 3z" fill="#5c6b7e"/></svg>
<svg class="a" style="left:646px;top:56px" width="34" height="32" viewBox="0 0 34 32"><defs><linearGradient id="fn" x1="0" y1="0" x2="1" y2="0"><stop offset="0" stop-color="#e9ebee"/><stop offset="0.5" stop-color="#b9bec6"/><stop offset="1" stop-color="#8a919b"/></linearGradient></defs>
<path d="M14 7.5 H32 L25.5 16 V27.5 L21 27.5 V16z" fill="url(#fn)" stroke="#8a919b" stroke-width="0.8"/>
<text x="3" y="14" font-size="14.5" font-family="Liberation Serif" fill="#2d5cb8" font-weight="bold">A</text>
<text x="2" y="30" font-size="14" font-family="Liberation Serif" font-weight="bold" fill="#8a4030">Я</text></svg>
<div class="a t" style="left:632px;top:90.5px;height:16px;line-height:16px;font-size:11.6px;color:#303030;">Сортировка</div>
<div class="a t" style="left:634px;top:103.5px;height:16px;line-height:16px;font-size:11.6px;color:#303030;">и фильтр</div>
<svg class="a" style="left:687px;top:110px" width="6" height="4" viewBox="0 0 6 4"><path d="M0.5 0.5h5l-2.5 3z" fill="#5c6b7e"/></svg>
<svg class="a" style="left:713px;top:57px" width="31" height="28" viewBox="0 0 31 28"><defs><linearGradient id="bn" x1="0" y1="0" x2="1" y2="0"><stop offset="0" stop-color="#6684b4"/><stop offset="0.3" stop-color="#d2e0f4"/><stop offset="0.65" stop-color="#8aa4cc"/><stop offset="1" stop-color="#3e5a8c"/></linearGradient></defs>
<rect x="10" y="3" width="4" height="4" rx="1" fill="url(#bn)"/><rect x="17" y="3" width="4" height="4" rx="1" fill="url(#bn)"/>
<rect x="7" y="6" width="8" height="4" rx="1" fill="url(#bn)"/><rect x="16" y="6" width="8" height="4" rx="1" fill="url(#bn)"/>
<rect x="5" y="9" width="10" height="7" rx="1" fill="url(#bn)"/><rect x="16" y="9" width="10" height="7" rx="1" fill="url(#bn)"/>
<rect x="12" y="14" width="8" height="4" fill="#2e4a7a"/>
<rect x="2" y="15" width="11" height="12" rx="1.5" fill="url(#bn)"/><rect x="18" y="15" width="11" height="12" rx="1.5" fill="url(#bn)"/>
<path d="M2 24.5h11M18 24.5h11" stroke="#3a5688" stroke-width="2"/><path d="M2 15.5h11M18 15.5h11" stroke="#dfe8f6" stroke-width="0.8"/></svg>
<div class="a t" style="left:708px;top:90.5px;height:16px;line-height:16px;font-size:11.6px;color:#303030;">Найти и</div>
<div class="a t" style="left:701px;top:103.5px;height:16px;line-height:16px;font-size:11.6px;color:#303030;">выделить</div>
<svg class="a" style="left:753px;top:110px" width="6" height="4" viewBox="0 0 6 4"><path d="M0.5 0.5h5l-2.5 3z" fill="#5c6b7e"/></svg>
<div class="a" style="left:8px;top:137px;width:853px;height:1px;background:#959fab"></div>
<div class="a" style="left:8px;top:138px;width:853px;height:3px;background:linear-gradient(#c9d0d8,#d9dee4)"></div>
<div class="a" style="left:8px;top:141px;width:853px;height:22px;background:#fff;border-top:1px solid #8d96a2;border-bottom:1px solid #8d96a2"></div>
<div class="a" style="left:8px;top:163px;width:853px;height:3px;background:#f3f5f9;border-bottom:1px solid #e6e6f0"></div>
<div class="a t" style="left:70px;top:144.5px;height:16px;line-height:16px;font-size:13px;color:#000;">A1</div>
<svg class="a" style="left:155px;top:150px" width="8" height="5" viewBox="0 0 8 5"><path d="M0 0h8l-4 4.5z" fill="#222"/></svg>
<div class="a" style="left:170px;top:142px;width:84px;height:20px;border-radius:10px 0 0 10px;background:linear-gradient(#e9ecf0,#dde2e8);border:1px solid #a3aebb;border-right:none"></div>
<svg class="a" style="left:176px;top:145px" width="10" height="10" viewBox="0 0 10 10"><defs><radialGradient id="pc" cx="0.4" cy="0.35" r="0.6"><stop offset="0" stop-color="#f4f6f8"/><stop offset="1" stop-color="#c4cad2"/></radialGradient></defs><circle cx="4.5" cy="5.5" r="3.8" fill="url(#pc)"/></svg>
<div class="a t" style="left:234px;top:144.0px;height:16px;line-height:16px;font-size:13px;color:#333;font-family:Liberation Serif;font-weight:bold"><i>f</i><span style="font-size:9px">x</span></div>
<div class="a" style="left:253px;top:142px;width:1px;height:20px;background:#a3aebb"></div>
<div class="a t" style="left:262px;top:144.5px;height:16px;line-height:16px;font-size:13.5px;color:#000;">Наименование товара</div>
<div class="a" style="left:845px;top:142px;width:16px;height:20px;background:#dfe2e7;border:1px dotted #c0c5cc"></div>
<svg class="a" style="left:848px;top:148px" width="10" height="7" viewBox="0 0 10 7"><path d="M1 1 L5 5 L9 1" stroke="#3c3c3c" stroke-width="2" fill="none"/></svg>
<div class="a" style="left:8px;top:166px;width:837px;height:439px;background:#fff"></div>
<div class="a" style="left:8px;top:166px;width:837px;height:21px;background:linear-gradient(#e2e5ea,#dce0e6);border-top:1px solid #8d96a2"></div>
<div class="a" style="left:8px;top:167px;width:26px;height:19px;background:#dee2e7"></div>
<svg class="a" style="left:18px;top:171px" width="12" height="13" viewBox="0 0 12 13"><path d="M11 1 V12 H1z" fill="#bcc2ca"/></svg>
<div class="a" style="left:33px;top:167px;width:1px;height:19px;background:#d3a04a"></div>
<div class="a" style="left:8px;top:186px;width:26px;height:1px;background:#d9a243"></div>
<div class="a" style="left:501px;top:186px;width:344px;height:1px;background:#dadcdd"></div>
<div class="a" style="left:501px;top:206px;width:344px;height:1px;background:#dadcdd"></div>
<div class="a" style="left:501px;top:226px;width:344px;height:1px;background:#dadcdd"></div>
<div class="a" style="left:501px;top:246px;width:344px;height:1px;background:#dadcdd"></div>
<div class="a" style="left:501px;top:266px;width:344px;height:1px;background:#dadcdd"></div>
<div class="a" style="left:501px;top:286px;width:344px;height:1px;background:#dadcdd"></div>
<div class="a" style="left:501px;top:306px;width:344px;height:1px;background:#dadcdd"></div>
<div class="a" style="left:501px;top:326px;width:344px;height:1px;background:#dadcdd"></div>
<div class="a" style="left:501px;top:346px;width:344px;height:1px;background:#dadcdd"></div>
<div class="a" style="left:501px;top:366px;width:344px;height:1px;background:#dadcdd"></div>
<div class="a" style="left:501px;top:386px;width:344px;height:1px;background:#dadcdd"></div>
<div class="a" style="left:501px;top:406px;width:344px;height:1px;background:#dadcdd"></div>
<div class="a" style="left:501px;top:426px;width:344px;height:1px;background:#dadcdd"></div>
<div class="a" style="left:501px;top:446px;width:344px;height:1px;background:#dadcdd"></div>
<div class="a" style="left:501px;top:466px;width:344px;height:1px;background:#dadcdd"></div>
<div class="a" style="left:501px;top:486px;width:344px;height:1px;background:#dadcdd"></div>
<div class="a" style="left:501px;top:506px;width:344px;height:1px;background:#dadcdd"></div>
<div class="a" style="left:501px;top:526px;width:344px;height:1px;background:#dadcdd"></div>
<div class="a" style="left:501px;top:546px;width:344px;height:1px;background:#dadcdd"></div>
<div class="a" style="left:501px;top:566px;width:344px;height:1px;background:#dadcdd"></div>
<div class="a" style="left:501px;top:586px;width:344px;height:1px;background:#dadcdd"></div>
<div class="a" style="left:501px;top:606px;width:344px;height:1px;background:#dadcdd"></div>
<div class="a" style="left:565px;top:166px;width:1px;height:439px;background:#dadcdd"></div>
<div class="a" style="left:629px;top:166px;width:1px;height:439px;background:#dadcdd"></div>
<div class="a" style="left:693px;top:166px;width:1px;height:439px;background:#dadcdd"></div>
<div class="a" style="left:757px;top:166px;width:1px;height:439px;background:#dadcdd"></div>
<div class="a" style="left:821px;top:166px;width:1px;height:439px;background:#dadcdd"></div>
<div class="a" style="left:845px;top:166px;width:1px;height:439px;background:#dadcdd"></div>
<div class="a" style="left:34px;top:167px;width:160px;height:19px;background:linear-gradient(#f9ce5c 0,#fbd866 50%,#fde674 100%)"></div>
<div class="a" style="left:194px;top:167px;width:161px;height:19px;background:linear-gradient(#f9ce5c 0,#fbd866 50%,#fde674 100%)"></div>
<div class="a" style="left:355px;top:167px;width:146px;height:19px;background:linear-gradient(#f9ce5c 0,#fbd866 50%,#fde674 100%)"></div>
<div class="a" style="left:194px;top:167px;width:1px;height:19px;background:#d3a24a"></div>
<div class="a" style="left:34px;top:186px;width:161px;height:1px;background:#d9a243"></div>
<div class="a t" style="left:34px;top:169.8px;height:16px;line-height:16px;font-size:13px;color:#222;width:160px;text-align:center;">A</div>
<div class="a" style="left:355px;top:167px;width:1px;height:19px;background:#d3a24a"></div>
<div class="a" style="left:194px;top:186px;width:162px;height:1px;background:#d9a243"></div>
<div class="a t" style="left:194px;top:169.8px;height:16px;line-height:16px;font-size:13px;color:#222;width:161px;text-align:center;">B</div>
<div class="a" style="left:501px;top:167px;width:1px;height:19px;background:#d3a24a"></div>
<div class="a" style="left:355px;top:186px;width:147px;height:1px;background:#d9a243"></div>
<div class="a t" style="left:355px;top:169.8px;height:16px;line-height:16px;font-size:13px;color:#222;width:146px;text-align:center;">C</div>
<div class="a" style="left:565px;top:167px;width:1px;height:19px;background:#aab2bc"></div>
<div class="a" style="left:501px;top:186px;width:64px;height:1px;background:#a2aab4"></div>
<div class="a t" style="left:501px;top:169.8px;height:16px;line-height:16px;font-size:13px;color:#333;width:64px;text-align:center;">D</div>
<div class="a" style="left:629px;top:167px;width:1px;height:19px;background:#aab2bc"></div>
<div class="a" style="left:565px;top:186px;width:64px;height:1px;background:#a2aab4"></div>
<div class="a t" style="left:565px;top:169.8px;height:16px;line-height:16px;font-size:13px;color:#333;width:64px;text-align:center;">E</div>
<div class="a" style="left:693px;top:167px;width:1px;height:19px;background:#aab2bc"></div>
<div class="a" style="left:629px;top:186px;width:64px;height:1px;background:#a2aab4"></div>
<div class="a t" style="left:629px;top:169.8px;height:16px;line-height:16px;font-size:13px;color:#333;width:64px;text-align:center;">F</div>
<div class="a" style="left:757px;top:167px;width:1px;height:19px;background:#aab2bc"></div>
<div class="a" style="left:693px;top:186px;width:64px;height:1px;background:#a2aab4"></div>
<div class="a t" style="left:693px;top:169.8px;height:16px;line-height:16px;font-size:13px;color:#333;width:64px;text-align:center;">G</div>
<div class="a" style="left:821px;top:167px;width:1px;height:19px;background:#aab2bc"></div>
<div class="a" style="left:757px;top:186px;width:64px;height:1px;background:#a2aab4"></div>
<div class="a t" style="left:757px;top:169.8px;height:16px;line-height:16px;font-size:13px;color:#333;width:64px;text-align:center;">H</div>
<div class="a" style="left:845px;top:167px;width:1px;height:19px;background:#aab2bc"></div>
<div class="a" style="left:821px;top:186px;width:24px;height:1px;background:#a2aab4"></div>
<div class="a" style="left:8px;top:187px;width:25px;height:418px;background:#ffd869"></div>
<div class="a" style="left:8px;top:186px;width:26px;height:1px;background:#d69c46"></div>
<div class="a t" style="left:8px;top:190.0px;height:16px;line-height:16px;font-size:13px;color:#222;width:25px;text-align:center;">1</div>
<div class="a" style="left:8px;top:206px;width:26px;height:1px;background:#d69c46"></div>
<div class="a t" style="left:8px;top:210.0px;height:16px;line-height:16px;font-size:13px;color:#0000ff;width:25px;text-align:center;">2</div>
<div class="a" style="left:8px;top:226px;width:26px;height:1px;background:#d69c46"></div>
<div class="a t" style="left:8px;top:230.0px;height:16px;line-height:16px;font-size:13px;color:#0000ff;width:25px;text-align:center;">3</div>
<div class="a" style="left:8px;top:246px;width:26px;height:1px;background:#d69c46"></div>
<div class="a t" style="left:8px;top:250.0px;height:16px;line-height:16px;font-size:13px;color:#0000ff;width:25px;text-align:center;">4</div>
<div class="a" style="left:8px;top:266px;width:26px;height:1px;background:#d69c46"></div>
<div class="a t" style="left:8px;top:270.0px;height:16px;line-height:16px;font-size:13px;color:#0000ff;width:25px;text-align:center;">5</div>
<div class="a" style="left:8px;top:286px;width:26px;height:1px;background:#d69c46"></div>
<div class="a t" style="left:8px;top:290.0px;height:16px;line-height:16px;font-size:13px;color:#0000ff;width:25px;text-align:center;">7</div>
<div class="a" style="left:8px;top:306px;width:26px;height:1px;background:#d69c46"></div>
<div class="a t" style="left:8px;top:310.0px;height:16px;line-height:16px;font-size:13px;color:#0000ff;width:25px;text-align:center;">8</div>
<div class="a" style="left:8px;top:326px;width:26px;height:1px;background:#d69c46"></div>
<div class="a t" style="left:8px;top:330.0px;height:16px;line-height:16px;font-size:13px;color:#0000ff;width:25px;text-align:center;">9</div>
<div class="a" style="left:8px;top:346px;width:26px;height:1px;background:#d69c46"></div>
<div class="a t" style="left:8px;top:350.0px;height:16px;line-height:16px;font-size:13px;color:#0000ff;width:25px;text-align:center;">10</div>
<div class="a" style="left:8px;top:366px;width:26px;height:1px;background:#d69c46"></div>
<div class="a t" style="left:8px;top:370.0px;height:16px;line-height:16px;font-size:13px;color:#0000ff;width:25px;text-align:center;">12</div>
<div class="a" style="left:8px;top:386px;width:26px;height:1px;background:#d69c46"></div>
<div class="a t" style="left:8px;top:390.0px;height:16px;line-height:16px;font-size:13px;color:#0000ff;width:25px;text-align:center;">13</div>
<div class="a" style="left:8px;top:406px;width:26px;height:1px;background:#d69c46"></div>
<div class="a t" style="left:8px;top:410.0px;height:16px;line-height:16px;font-size:13px;color:#0000ff;width:25px;text-align:center;">14</div>
<div class="a" style="left:8px;top:426px;width:26px;height:1px;background:#d69c46"></div>
<div class="a t" style="left:8px;top:430.0px;height:16px;line-height:16px;font-size:13px;color:#0000ff;width:25px;text-align:center;">15</div>
<div class="a" style="left:8px;top:446px;width:26px;height:1px;background:#d69c46"></div>
<div class="a t" style="left:8px;top:450.0px;height:16px;line-height:16px;font-size:13px;color:#0000ff;width:25px;text-align:center;">17</div>
<div class="a" style="left:8px;top:466px;width:26px;height:1px;background:#d69c46"></div>
<div class="a t" style="left:8px;top:470.0px;height:16px;line-height:16px;font-size:13px;color:#0000ff;width:25px;text-align:center;">18</div>
<div class="a" style="left:8px;top:486px;width:26px;height:1px;background:#d69c46"></div>
<div class="a t" style="left:8px;top:490.0px;height:16px;line-height:16px;font-size:13px;color:#0000ff;width:25px;text-align:center;">19</div>
<div class="a" style="left:8px;top:506px;width:26px;height:1px;background:#d69c46"></div>
<div class="a t" style="left:8px;top:510.0px;height:16px;line-height:16px;font-size:13px;color:#0000ff;width:25px;text-align:center;">20</div>
<div class="a" style="left:8px;top:526px;width:26px;height:1px;background:#d69c46"></div>
<div class="a t" style="left:8px;top:530.0px;height:16px;line-height:16px;font-size:13px;color:#0000ff;width:25px;text-align:center;">21</div>
<div class="a" style="left:8px;top:546px;width:26px;height:1px;background:#d69c46"></div>
<div class="a t" style="left:8px;top:550.0px;height:16px;line-height:16px;font-size:13px;color:#0000ff;width:25px;text-align:center;">24</div>
<div class="a" style="left:8px;top:566px;width:26px;height:1px;background:#d69c46"></div>
<div class="a t" style="left:8px;top:570.0px;height:16px;line-height:16px;font-size:13px;color:#0000ff;width:25px;text-align:center;">25</div>
<div class="a" style="left:8px;top:586px;width:26px;height:1px;background:#d69c46"></div>
<div class="a t" style="left:8px;top:590.0px;height:16px;line-height:16px;font-size:13px;color:#0000ff;width:25px;text-align:center;">26</div>
<div class="a" style="left:33px;top:186px;width:1px;height:419px;background:#d69c46"></div>
<div class="a" style="left:8px;top:287px;width:25px;height:1px;background:#d09438"></div>
<div class="a" style="left:8px;top:367px;width:25px;height:1px;background:#d09438"></div>
<div class="a" style="left:8px;top:447px;width:25px;height:1px;background:#d09438"></div>
<div class="a" style="left:8px;top:547px;width:25px;height:1px;background:#d09438"></div>
<div class="a" style="left:35px;top:188px;width:159px;height:18px;background:#ffff00"></div>
<div class="a" style="left:195px;top:188px;width:305px;height:18px;background:#b5d862"></div>
<div class="a" style="left:34px;top:206px;width:160px;height:399px;background:#71bf8c"></div>
<div class="a" style="left:194px;top:206px;width:307px;height:399px;background:#b8dafb"></div>
<div class="a" style="left:34px;top:206px;width:467px;height:1px;background:#1b3454"></div>
<div class="a" style="left:34px;top:226px;width:467px;height:1px;background:#1b3454"></div>
<div class="a" style="left:34px;top:246px;width:467px;height:1px;background:#1b3454"></div>
<div class="a" style="left:34px;top:266px;width:467px;height:1px;background:#1b3454"></div>
<div class="a" style="left:34px;top:286px;width:467px;height:1px;background:#1b3454"></div>
<div class="a" style="left:34px;top:306px;width:467px;height:1px;background:#1b3454"></div>
<div class="a" style="left:34px;top:326px;width:467px;height:1px;background:#1b3454"></div>
<div class="a" style="left:34px;top:346px;width:467px;height:1px;background:#1b3454"></div>
<div class="a" style="left:34px;top:366px;width:467px;height:1px;background:#1b3454"></div>
<div class="a" style="left:34px;top:386px;width:467px;height:1px;background:#1b3454"></div>
<div class="a" style="left:34px;top:406px;width:467px;height:1px;background:#1b3454"></div>
<div class="a" style="left:34px;top:426px;width:467px;height:1px;background:#1b3454"></div>
<div class="a" style="left:34px;top:446px;width:467px;height:1px;background:#1b3454"></div>
<div class="a" style="left:34px;top:466px;width:467px;height:1px;background:#1b3454"></div>
<div class="a" style="left:34px;top:486px;width:467px;height:1px;background:#1b3454"></div>
<div class="a" style="left:34px;top:506px;width:467px;height:1px;background:#1b3454"></div>
<div class="a" style="left:34px;top:526px;width:467px;height:1px;background:#1b3454"></div>
<div class="a" style="left:34px;top:546px;width:467px;height:1px;background:#1b3454"></div>
<div class="a" style="left:34px;top:566px;width:467px;height:1px;background:#1b3454"></div>
<div class="a" style="left:34px;top:586px;width:467px;height:1px;background:#1b3454"></div>
<div class="a" style="left:34px;top:606px;width:467px;height:1px;background:#1b3454"></div>
<div class="a" style="left:194px;top:186px;width:1px;height:419px;background:#1b3454"></div>
<div class="a" style="left:355px;top:186px;width:1px;height:419px;background:#1b3454"></div>
<div class="a" style="left:500px;top:186px;width:1px;height:419px;background:#1b3454"></div>
<div class="a" style="left:502px;top:187px;width:1px;height:418px;background:#000"></div>
<div class="a" style="left:503px;top:187px;width:1px;height:418px;background:rgba(0,0,0,.3)"></div>
<div class="a" style="left:34px;top:187px;width:467px;height:1px;background:#0000ff"></div>
<div class="a" style="left:34px;top:187px;width:1px;height:19px;background:#0000ff"></div>
<div class="a" style="left:34px;top:206px;width:1px;height:399px;background:#7030a0"></div>
<div class="a t" style="left:44px;top:190.0px;height:16px;line-height:16px;font-size:13.5px;color:#000;">Наименование товар</div>
<div class="a t" style="left:194px;top:190.0px;height:16px;line-height:16px;font-size:13.5px;color:#000;width:161px;text-align:center;">Дата</div>
<div class="a t" style="left:362px;top:190.0px;height:16px;line-height:16px;font-size:13.8px;color:#000;">Сумма выручки, ру</div>
<div class="a" style="left:178px;top:188px;width:16px;height:17px;background:linear-gradient(#ffffff,#eceef2);border:1px solid #c3c8cf;border-top-color:#e8eaee;border-right-color:#d5d9de"></div>
<svg class="a" style="left:182px;top:194px" width="8" height="5" viewBox="0 0 8 5"><path d="M0 0h8l-4 4.5z" fill="#606060"/></svg>
<div class="a" style="left:338px;top:188px;width:16px;height:17px;background:linear-gradient(#ffffff,#eceef2);border:1px solid #c3c8cf;border-top-color:#e8eaee;border-right-color:#d5d9de"></div>
<svg class="a" style="left:340px;top:191px" width="13" height="11" viewBox="0 0 13 11"><path d="M1 6.5 h4.5 l-2.25 2.5z" fill="#5a5a5a"/><path d="M5 1 h8 l-3 3.5 v4.5 h-2 v-4.5z" fill="#555"/></svg>
<div class="a" style="left:484px;top:188px;width:16px;height:17px;background:linear-gradient(#ffffff,#eceef2);border:1px solid #c3c8cf;border-top-color:#e8eaee;border-right-color:#d5d9de"></div>
<svg class="a" style="left:488px;top:194px" width="8" height="5" viewBox="0 0 8 5"><path d="M0 0h8l-4 4.5z" fill="#606060"/></svg>
<div class="a" style="left:195px;top:188px;width:143px;height:1px;background:#ffff00"></div>
<div class="a" style="left:356px;top:188px;width:128px;height:1px;background:#ffff00"></div>
<div class="a t" style="left:36px;top:209.5px;height:16px;line-height:16px;font-size:13.2px;color:#000;">Картофель</div>
<div class="a t" style="left:194px;top:209.5px;height:16px;line-height:16px;font-size:13.2px;color:#000;width:161px;text-align:center;">01.05.2016</div>
<div class="a t" style="left:355px;top:209.5px;height:16px;line-height:16px;font-size:13.2px;color:#000;width:145px;text-align:center;">10526</div>
<div class="a t" style="left:36px;top:229.5px;height:16px;line-height:16px;font-size:13.2px;color:#000;">Рыба</div>
<div class="a t" style="left:194px;top:229.5px;height:16px;line-height:16px;font-size:13.2px;color:#000;width:161px;text-align:center;">01.05.2016</div>
<div class="a t" style="left:355px;top:229.5px;height:16px;line-height:16px;font-size:13.2px;color:#000;width:145px;text-align:center;">17456</div>
<div class="a t" style="left:36px;top:249.5px;height:16px;line-height:16px;font-size:13.2px;color:#000;">Мясо</div>
<div class="a t" style="left:194px;top:249.5px;height:16px;line-height:16px;font-size:13.2px;color:#000;width:161px;text-align:center;">01.05.2016</div>
<div class="a t" style="left:355px;top:249.5px;height:16px;line-height:16px;font-size:13.2px;color:#000;width:145px;text-align:center;">21563</div>
<div class="a t" style="left:36px;top:269.5px;height:16px;line-height:16px;font-size:13.2px;color:#000;">Сахар</div>
<div class="a t" style="left:194px;top:269.5px;height:16px;line-height:16px;font-size:13.2px;color:#000;width:161px;text-align:center;">01.05.2016</div>
<div class="a t" style="left:355px;top:269.5px;height:16px;line-height:16px;font-size:13.2px;color:#000;width:145px;text-align:center;">8556</div>
<div class="a t" style="left:36px;top:289.5px;height:16px;line-height:16px;font-size:13.2px;color:#000;">Картофель</div>
<div class="a t" style="left:194px;top:289.5px;height:16px;line-height:16px;font-size:13.2px;color:#000;width:161px;text-align:center;">02.05.2016</div>
<div class="a t" style="left:355px;top:289.5px;height:16px;line-height:16px;font-size:13.2px;color:#000;width:145px;text-align:center;">11896</div>
<div class="a t" style="left:36px;top:309.5px;height:16px;line-height:16px;font-size:13.2px;color:#000;">Рыба</div>
<div class="a t" style="left:194px;top:309.5px;height:16px;line-height:16px;font-size:13.2px;color:#000;width:161px;text-align:center;">02.05.2016</div>
<div class="a t" style="left:355px;top:309.5px;height:16px;line-height:16px;font-size:13.2px;color:#000;width:145px;text-align:center;">21546</div>
<div class="a t" style="left:36px;top:329.5px;height:16px;line-height:16px;font-size:13.2px;color:#000;">Мясо</div>
<div class="a t" style="left:194px;top:329.5px;height:16px;line-height:16px;font-size:13.2px;color:#000;width:161px;text-align:center;">02.05.2016</div>
<div class="a t" style="left:355px;top:329.5px;height:16px;line-height:16px;font-size:13.2px;color:#000;width:145px;text-align:center;">10526</div>
<div class="a t" style="left:36px;top:349.5px;height:16px;line-height:16px;font-size:13.2px;color:#000;">Сахар</div>
<div class="a t" style="left:194px;top:349.5px;height:16px;line-height:16px;font-size:13.2px;color:#000;width:161px;text-align:center;">02.05.2016</div>
<div class="a t" style="left:355px;top:349.5px;height:16px;line-height:16px;font-size:13.2px;color:#000;width:145px;text-align:center;">7855</div>
<div class="a t" style="left:36px;top:369.5px;height:16px;line-height:16px;font-size:13.2px;color:#000;">Картофель</div>
<div class="a t" style="left:194px;top:369.5px;height:16px;line-height:16px;font-size:13.2px;color:#000;width:161px;text-align:center;">03.05.2016</div>
<div class="a t" style="left:355px;top:369.5px;height:16px;line-height:16px;font-size:13.2px;color:#000;width:145px;text-align:center;">15456</div>
<div class="a t" style="left:36px;top:389.5px;height:16px;line-height:16px;font-size:13.2px;color:#000;">Рыба</div>
<div class="a t" style="left:194px;top:389.5px;height:16px;line-height:16px;font-size:13.2px;color:#000;width:161px;text-align:center;">03.05.2016</div>
<div class="a t" style="left:355px;top:389.5px;height:16px;line-height:16px;font-size:13.2px;color:#000;width:145px;text-align:center;">11496</div>
<div class="a t" style="left:36px;top:409.5px;height:16px;line-height:16px;font-size:13.2px;color:#000;">Мясо</div>
<div class="a t" style="left:194px;top:409.5px;height:16px;line-height:16px;font-size:13.2px;color:#000;width:161px;text-align:center;">03.05.2016</div>
<div class="a t" style="left:355px;top:409.5px;height:16px;line-height:16px;font-size:13.2px;color:#000;width:145px;text-align:center;">9568</div>
<div class="a t" style="left:36px;top:429.5px;height:16px;line-height:16px;font-size:13.2px;color:#000;">Сахар</div>
<div class="a t" style="left:194px;top:429.5px;height:16px;line-height:16px;font-size:13.2px;color:#000;width:161px;text-align:center;">03.05.2016</div>
<div class="a t" style="left:355px;top:429.5px;height:16px;line-height:16px;font-size:13.2px;color:#000;width:145px;text-align:center;">1234</div>
<div class="a t" style="left:36px;top:449.5px;height:16px;line-height:16px;font-size:13.2px;color:#000;">Картофель</div>
<div class="a t" style="left:194px;top:449.5px;height:16px;line-height:16px;font-size:13.2px;color:#000;width:161px;text-align:center;">04.05.2016</div>
<div class="a t" style="left:355px;top:449.5px;height:16px;line-height:16px;font-size:13.2px;color:#000;width:145px;text-align:center;">14589</div>
<div class="a t" style="left:36px;top:469.5px;height:16px;line-height:16px;font-size:13.2px;color:#000;">Рыба</div>
<div class="a t" style="left:194px;top:469.5px;height:16px;line-height:16px;font-size:13.2px;color:#000;width:161px;text-align:center;">04.05.2016</div>
<div class="a t" style="left:355px;top:469.5px;height:16px;line-height:16px;font-size:13.2px;color:#000;width:145px;text-align:center;">10456</div>
<div class="a t" style="left:36px;top:489.5px;height:16px;line-height:16px;font-size:13.2px;color:#000;">Мясо</div>
<div class="a t" style="left:194px;top:489.5px;height:16px;line-height:16px;font-size:13.2px;color:#000;width:161px;text-align:center;">04.05.2016</div>
<div class="a t" style="left:355px;top:489.5px;height:16px;line-height:16px;font-size:13.2px;color:#000;width:145px;text-align:center;">15461</div>
<div class="a t" style="left:36px;top:509.5px;height:16px;line-height:16px;font-size:13.2px;color:#000;">Сахар</div>
<div class="a t" style="left:194px;top:509.5px;height:16px;line-height:16px;font-size:13.2px;color:#000;width:161px;text-align:center;">04.05.2016</div>
<div class="a t" style="left:355px;top:509.5px;height:16px;line-height:16px;font-size:13.2px;color:#000;width:145px;text-align:center;">3256</div>
<div class="a t" style="left:36px;top:529.5px;height:16px;line-height:16px;font-size:13.2px;color:#000;">Чай</div>
<div class="a t" style="left:194px;top:529.5px;height:16px;line-height:16px;font-size:13.2px;color:#000;width:161px;text-align:center;">04.05.2016</div>
<div class="a t" style="left:355px;top:529.5px;height:16px;line-height:16px;font-size:13.2px;color:#000;width:145px;text-align:center;">2458</div>
<div class="a t" style="left:36px;top:549.5px;height:16px;line-height:16px;font-size:13.2px;color:#000;">Мясо</div>
<div class="a t" style="left:194px;top:549.5px;height:16px;line-height:16px;font-size:13.2px;color:#000;width:161px;text-align:center;">05.05.2016</div>
<div class="a t" style="left:355px;top:549.5px;height:16px;line-height:16px;font-size:13.2px;color:#000;width:145px;text-align:center;">10256</div>
<div class="a t" style="left:36px;top:569.5px;height:16px;line-height:16px;font-size:13.2px;color:#000;">Сахар</div>
<div class="a t" style="left:194px;top:569.5px;height:16px;line-height:16px;font-size:13.2px;color:#000;width:161px;text-align:center;">05.05.2016</div>
<div class="a t" style="left:355px;top:569.5px;height:16px;line-height:16px;font-size:13.2px;color:#000;width:145px;text-align:center;">5469</div>
<div class="a t" style="left:36px;top:589.5px;height:16px;line-height:16px;font-size:13.2px;color:#000;">Чай</div>
<div class="a t" style="left:194px;top:589.5px;height:16px;line-height:16px;font-size:13.2px;color:#000;width:161px;text-align:center;">05.05.2016</div>
<div class="a t" style="left:355px;top:589.5px;height:16px;line-height:16px;font-size:13.2px;color:#000;width:145px;text-align:center;">2457</div>
<div class="a" style="left:845px;top:166px;width:16px;height:439px;background:linear-gradient(90deg,#d3d8e0,#dde2e9 50%,#d6dbe3)"></div>
<div class="a" style="left:846px;top:168px;width:14px;height:8px;background:#fff;border:1px solid #7b8ba0"></div>
<div class="a" style="left:849px;top:171px;width:8px;height:1px;background:#7b8ba0"></div>
<svg class="a" style="left:848px;top:180px" width="10" height="6" viewBox="0 0 10 6"><path d="M0 5.5 L5 0.5 L10 5.5z" fill="#333"/></svg>
<div class="a" style="left:845px;top:191px;width:15px;height:213px;background:linear-gradient(90deg,#f4f5f8,#e9ecf0 50%,#dde1e7);border:1px solid #8a929d;border-radius:3px"></div>
<div class="a" style="left:850px;top:294px;width:7px;height:1px;background:#8a96a6"></div>
<div class="a" style="left:850px;top:296px;width:7px;height:1px;background:#8a96a6"></div>
<div class="a" style="left:850px;top:298px;width:7px;height:1px;background:#8a96a6"></div>
<div class="a" style="left:850px;top:300px;width:7px;height:1px;background:#8a96a6"></div>
<svg class="a" style="left:848px;top:594px" width="10" height="6" viewBox="0 0 10 6"><path d="M0 0.5 L5 5.5 L10 0.5z" fill="#333"/></svg>
<div class="a" style="left:8px;top:605px;width:853px;height:16px;background:linear-gradient(#d8dde4,#e0e4ea)"></div>
<div class="a" style="left:8px;top:605px;width:853px;height:1px;background:#b6c0cc"></div>
<svg class="a" style="left:13px;top:608px" width="10" height="10" viewBox="0 0 10 10"><path d="M2 1v8M8 1L3 5l5 4z" fill="#444" stroke="#444" stroke-width="0.8"/></svg>
<svg class="a" style="left:29px;top:608px" width="10" height="10" viewBox="0 0 10 10"><path d="M7 1L2 5l5 4z" fill="#444" stroke="#444" stroke-width="0.8"/></svg>
<svg class="a" style="left:43px;top:608px" width="10" height="10" viewBox="0 0 10 10"><path d="M2 1l5 4-5 4z" fill="#444" stroke="#444" stroke-width="0.8"/></svg>
<svg class="a" style="left:57px;top:608px" width="10" height="10" viewBox="0 0 10 10"><path d="M1 1l5 4-5 4zM7 1v8" fill="#444" stroke="#444" stroke-width="0.8"/></svg>
<div class="a" style="left:70px;top:605px;width:1px;height:15px;background:#9aa5b3"></div>
<svg class="a" style="left:70px;top:605px" width="210" height="16" viewBox="0 0 210 16"><path d="M1 0 H63 L51 14.5 H1z" fill="#fff"/>
<path d="M63.5 0 L51 14.5" stroke="#9aa5b3" fill="none"/><path d="M116.5 0 L104 14.5" stroke="#9aa5b3" fill="none"/>
<path d="M170.5 0 L158 14.5" stroke="#9aa5b3" fill="none"/><path d="M202.5 0 L190 14.5" stroke="#9aa5b3" fill="none"/>
<path d="M51 15 L55 11 V15z" fill="#8a95a4"/><path d="M104 15 L108 11 V15z" fill="#8a95a4"/><path d="M158 15 L162 11 V15z" fill="#8a95a4"/><path d="M190 15 L194 11 V15z" fill="#8a95a4"/>
<path d="M0 15.5 H210" stroke="#b6bfcb"/></svg>
<div class="a t" style="left:80px;top:604.5px;height:16px;line-height:16px;font-size:12.3px;color:#333;font-weight:bold">Лист1</div>
<div class="a t" style="left:134px;top:604.5px;height:16px;line-height:16px;font-size:12.3px;color:#444;">Лист2</div>
<div class="a t" style="left:187px;top:604.5px;height:16px;line-height:16px;font-size:12.3px;color:#444;">Лист3</div>
<svg class="a" style="left:242px;top:606px" width="15" height="13" viewBox="0 0 15 13"><rect x="3.5" y="4.5" width="11" height="8" rx="1.5" fill="#fff" stroke="#4a6a9a"/><path d="M4 0.5 l1 2.2 2.3 0.2-1.8 1.5 .6 2.3-2.1-1.3-2.1 1.3 .6-2.3L0.7 2.9 3 2.7z" fill="#f5b820"/></svg>
<div class="a" style="left:510px;top:606px;width:8px;height:14px;background:linear-gradient(90deg,#fff,#e8ecf5);border:1px solid #8a929d"></div>
<div class="a" style="left:513px;top:609px;width:1px;height:8px;background:#6a7280"></div>
<svg class="a" style="left:522px;top:608px" width="6" height="10" viewBox="0 0 6 10"><path d="M5.5 0 V10 L0.5 5z" fill="#333"/></svg>
<div class="a" style="left:535px;top:606px;width:250px;height:14px;background:linear-gradient(#f4f5f8,#e9ecf0 50%,#dde1e7);border:1px solid #8a929d;border-radius:3px"></div>
<div class="a" style="left:656px;top:610px;width:1px;height:7px;background:#8a96a6"></div>
<div class="a" style="left:658px;top:610px;width:1px;height:7px;background:#8a96a6"></div>
<div class="a" style="left:660px;top:610px;width:1px;height:7px;background:#8a96a6"></div>
<div class="a" style="left:662px;top:610px;width:1px;height:7px;background:#8a96a6"></div>
<svg class="a" style="left:825px;top:608px" width="6" height="10" viewBox="0 0 6 10"><path d="M0.5 0 V10 L5.5 5z" fill="#333"/></svg>
<div class="a" style="left:837px;top:606px;width:8px;height:14px;background:linear-gradient(90deg,#fff,#e8ecf5);border:1px solid #8a929d"></div>
<div class="a" style="left:840px;top:609px;width:1px;height:8px;background:#6a7280"></div>
<div class="a" style="left:8px;top:621px;width:853px;height:23px;background:linear-gradient(#eef1f5 0,#dfe3e9 50%,#cfd5dd 100%);border-top:1px solid #959eaa;border-bottom:1px solid #7f8a98"></div>
<svg class="a" style="left:16px;top:622.1px;overflow:hidden" width="42" height="19"><text x="0" y="13.4" font-family="Liberation Sans" font-size="11.4" fill="#3a3a3a" textLength="36.3" lengthAdjust="spacingAndGlyphs" >Готово</text></svg>
<svg class="a" style="left:69.2px;top:622.1px;overflow:hidden" width="146" height="19"><text x="0" y="13.4" font-family="Liberation Sans" font-size="11.4" fill="#3a3a3a" textLength="140" lengthAdjust="spacingAndGlyphs" >Найдено записей: 28 из 33</text></svg>
<div class="a" style="left:220px;top:623px;width:1px;height:19px;background:#b4bcc7"></div>
<svg class="a" style="left:229px;top:625px" width="16" height="14" viewBox="0 0 16 14"><rect x="0.5" y="2.5" width="15" height="11" fill="#fff" stroke="#4a6a9a"/><rect x="1" y="3" width="14" height="2" fill="#4a7ac0"/><path d="M1 7h14M1 10h14M5 5v8M10 5v8" stroke="#8aa8d0" stroke-width="0.8"/><circle cx="4" cy="3" r="2.5" fill="#e04040"/></svg>
<div class="a" style="left:254px;top:623px;width:1px;height:19px;background:#b4bcc7"></div>
<svg class="a" style="left:286px;top:622.1px;overflow:hidden" width="119" height="19"><text x="0" y="13.4" font-family="Liberation Sans" font-size="11.4" fill="#3a3a3a" textLength="113" lengthAdjust="spacingAndGlyphs" >Среднее: 26639,51786</text></svg>
<svg class="a" style="left:416.2px;top:622.1px;overflow:hidden" width="85" height="19"><text x="0" y="13.4" font-family="Liberation Sans" font-size="11.4" fill="#3a3a3a" textLength="79.8" lengthAdjust="spacingAndGlyphs" >Количество: 87</text></svg>
<svg class="a" style="left:512px;top:622.1px;overflow:hidden" width="87" height="19"><text x="0" y="13.4" font-family="Liberation Sans" font-size="11.4" fill="#3a3a3a" textLength="81" lengthAdjust="spacingAndGlyphs" >Сумма: 1491813</text></svg>
<div class="a" style="left:604px;top:623px;width:1px;height:19px;background:#b4bcc7"></div>
<div class="a" style="left:609px;top:623px;width:19px;height:19px;background:linear-gradient(#fde9a0,#fcd96f);border:1px solid #dcae4e;border-radius:3px"></div>
<svg class="a" style="left:612px;top:627px" width="13" height="10" viewBox="0 0 13 10"><rect x="0" y="0" width="13" height="10" fill="#4a5262"/><g fill="#fff"><rect x="1" y="1" width="3" height="2"/><rect x="5" y="1" width="3" height="2"/><rect x="9" y="1" width="3" height="2"/><rect x="1" y="4" width="3" height="2"/><rect x="5" y="4" width="3" height="2"/><rect x="9" y="4" width="3" height="2"/><rect x="1" y="7" width="3" height="2"/><rect x="5" y="7" width="3" height="2"/><rect x="9" y="7" width="3" height="2"/></g></svg>
<svg class="a" style="left:630px;top:626px" width="14" height="12" viewBox="0 0 14 12"><rect x="0.5" y="0.5" width="13" height="11" fill="#c9cdd3" stroke="#5d646e"/><rect x="3.5" y="2.5" width="7" height="7" fill="#f4f5f7" stroke="#6d747e"/><path d="M5 4.5h4M5 6h4M5 7.5h4" stroke="#9aa0a8"/></svg>
<svg class="a" style="left:649px;top:626px" width="14" height="12" viewBox="0 0 14 12"><rect x="0.5" y="0.5" width="13" height="11" fill="#b9bec5" stroke="#5d646e"/><rect x="1" y="1" width="4" height="6" fill="#fff"/><rect x="6" y="1" width="3" height="6" fill="#fff"/><path d="M5.5 1v6M9.5 1v6M1 7.5h9" stroke="#5d646e"/></svg>
<svg class="a" style="left:674.7px;top:621.9px;overflow:hidden" width="33" height="19"><text x="0" y="13.6" font-family="Liberation Sans" font-size="11.6" fill="#3a3a3a" textLength="27.2" lengthAdjust="spacingAndGlyphs" >100%</text></svg>
<svg class="a" style="left:709px;top:622px" width="135" height="20" viewBox="0 0 135 20"><path d="M17 9.5 H117" stroke="#9aa4b2"/>
<circle cx="9" cy="9.5" r="7.8" fill="#fff" stroke="#7c8796" stroke-width="1.2"/><path d="M5 9.5 H13" stroke="#333" stroke-width="2"/>
<circle cx="125" cy="9.5" r="7.8" fill="#fff" stroke="#7c8796" stroke-width="1.2"/><path d="M121 9.5 H129 M125 5.5 V13.5" stroke="#333" stroke-width="2"/>
<path d="M63.5 2.5 H72.5 V12 L68 16 L63.5 12z" fill="#fbfcfd" stroke="#7c8796"/></svg>
<svg class="a" style="left:852px;top:634px" width="9" height="9" viewBox="0 0 9 9"><g fill="#a5afbc"><rect x="6" y="0" width="2" height="2"/><rect x="3" y="3" width="2" height="2"/><rect x="6" y="3" width="2" height="2"/><rect x="0" y="6" width="2" height="2"/><rect x="3" y="6" width="2" height="2"/><rect x="6" y="6" width="2" height="2"/></g></svg>
</body></html>
